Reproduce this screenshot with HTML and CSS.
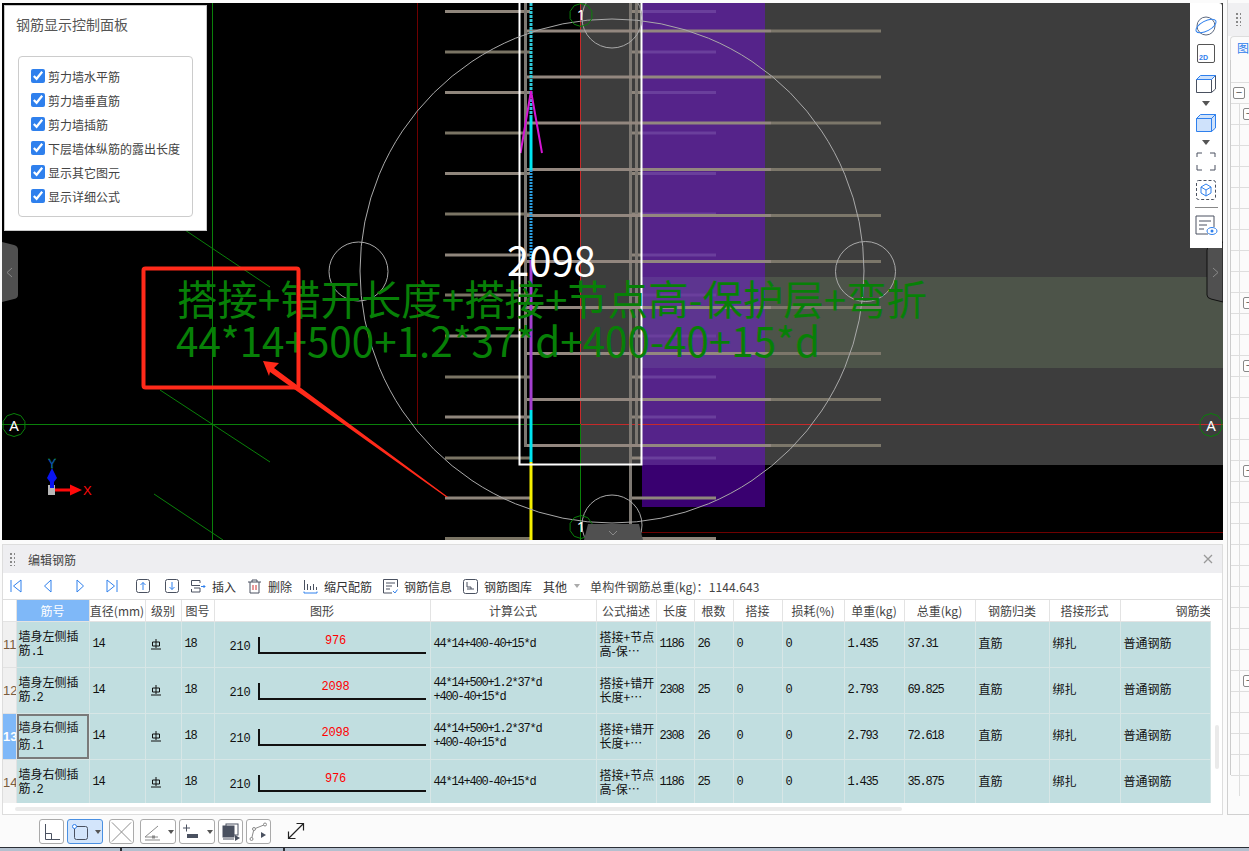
FILE: index.html
```html
<!DOCTYPE html>
<html lang="zh">
<head>
<meta charset="utf-8">
<title>编辑钢筋</title>
<link rel="stylesheet" href="styles.css">
</head>
<body>
<div class="main">
  <div class="left">
    <div class="canvas">
      <svg class="scene" viewBox="2 3 1221 537" width="1221" height="537">
        <defs>
          <polygon id="bub" class="bub" points="0,-11.5 6.8,-9.3 10.9,-3.6 10.9,3.6 6.8,9.3 0,11.5 -6.8,9.3 -10.9,3.6 -10.9,-3.6 -6.8,-9.3"/>
        </defs>
        <rect class="gray" x="581" y="3" width="642" height="462"/>
        <rect class="band" x="765" y="277" width="458" height="91"/>
        <rect class="purple-d" x="642" y="465" width="123" height="42"/>
        <rect class="purple" x="642" y="3" width="123" height="462"/>
        <rect class="purple-l" x="642" y="277" width="123" height="91"/>

        <g class="g-line">
          <line x1="212.5" y1="3" x2="212.5" y2="540"/>
          <line x1="185" y1="230" x2="270" y2="287"/>
          <line x1="160" y1="390" x2="270" y2="462"/>
          <line x1="154" y1="494" x2="223" y2="540"/>
          <line x1="2" y1="424.5" x2="581" y2="424.5"/>
          <line x1="580.5" y1="425" x2="580.5" y2="540"/>
        </g>
        <g class="dr-line">
          <line x1="417.5" y1="3" x2="417.5" y2="424"/>
          <line x1="642" y1="532.5" x2="1223" y2="532.5"/>
        </g>
        <g class="r-line">
          <line x1="580.5" y1="3" x2="580.5" y2="424"/>
          <line x1="581" y1="424.5" x2="1223" y2="424.5"/>
        </g>

        <g class="rb-a">
          <line x1="445" y1="11.5" x2="530" y2="11.5"/>
          <line x1="445" y1="92.5" x2="530" y2="92.5"/>
          <line x1="445" y1="173.5" x2="530" y2="173.5"/>
          <line x1="445" y1="255" x2="530" y2="255"/>
          <line x1="445" y1="336" x2="530" y2="336"/>
          <line x1="445" y1="417" x2="530" y2="417"/>
          <line x1="445" y1="498" x2="530" y2="498"/>
          <line x1="630" y1="498" x2="716" y2="498"/>
          <line x1="630" y1="538.5" x2="716" y2="538.5"/>
        </g>
        <g class="rb-b">
          <line x1="445" y1="52" x2="530" y2="52"/>
          <line x1="445" y1="133" x2="530" y2="133"/>
          <line x1="445" y1="214" x2="530" y2="214"/>
          <line x1="445" y1="295" x2="530" y2="295"/>
          <line x1="445" y1="377" x2="530" y2="377"/>
          <line x1="445" y1="458" x2="530" y2="458"/>
          <line x1="445" y1="538.5" x2="530" y2="538.5"/>
        </g>
        <g class="rb-p">
          <line x1="642" y1="11.5" x2="716" y2="11.5"/>
          <line x1="642" y1="52" x2="716" y2="52"/>
          <line x1="642" y1="92.5" x2="716" y2="92.5"/>
          <line x1="642" y1="133" x2="716" y2="133"/>
          <line x1="642" y1="173.5" x2="716" y2="173.5"/>
          <line x1="642" y1="214" x2="716" y2="214"/>
          <line x1="642" y1="255" x2="716" y2="255"/>
          <line x1="642" y1="295" x2="716" y2="295"/>
          <line x1="642" y1="336" x2="716" y2="336"/>
          <line x1="642" y1="377" x2="716" y2="377"/>
          <line x1="642" y1="417" x2="716" y2="417"/>
          <line x1="642" y1="458" x2="716" y2="458"/>
        </g>
        <g class="rb-a">
          <line x1="630" y1="11.5" x2="642" y2="11.5"/>
          <line x1="630" y1="52" x2="642" y2="52"/>
          <line x1="630" y1="92.5" x2="642" y2="92.5"/>
          <line x1="630" y1="133" x2="642" y2="133"/>
          <line x1="630" y1="173.5" x2="642" y2="173.5"/>
          <line x1="630" y1="214" x2="642" y2="214"/>
          <line x1="630" y1="255" x2="642" y2="255"/>
          <line x1="630" y1="295" x2="642" y2="295"/>
          <line x1="630" y1="336" x2="642" y2="336"/>
          <line x1="630" y1="377" x2="642" y2="377"/>
          <line x1="630" y1="417" x2="642" y2="417"/>
          <line x1="630" y1="458" x2="642" y2="458"/>
        </g>
        <g class="rb-v">
          <line x1="525.5" y1="3" x2="525.5" y2="447"/>
          <line x1="630.5" y1="3" x2="630.5" y2="540"/>
          <line x1="636.5" y1="3" x2="636.5" y2="447"/>
        </g>
        <g class="rb-c">
          <line x1="527" y1="31" x2="771" y2="31"/>
          <line x1="527" y1="77" x2="771" y2="77"/>
          <line x1="527" y1="123" x2="771" y2="123"/>
          <line x1="527" y1="169.5" x2="771" y2="169.5"/>
          <line x1="527" y1="215.5" x2="771" y2="215.5"/>
          <line x1="527" y1="261.5" x2="771" y2="261.5"/>
          <line x1="527" y1="307.5" x2="771" y2="307.5"/>
          <line x1="527" y1="353.5" x2="771" y2="353.5"/>
          <line x1="527" y1="399.5" x2="771" y2="399.5"/>
          <line x1="527" y1="445.5" x2="771" y2="445.5"/>
        </g>
        <g class="rb-d">
          <line x1="771" y1="31" x2="881" y2="31"/>
          <line x1="771" y1="77" x2="881" y2="77"/>
          <line x1="771" y1="123" x2="881" y2="123"/>
          <line x1="771" y1="169.5" x2="881" y2="169.5"/>
          <line x1="771" y1="215.5" x2="881" y2="215.5"/>
          <line x1="771" y1="261.5" x2="881" y2="261.5"/>
          <line x1="771" y1="307.5" x2="881" y2="307.5"/>
          <line x1="771" y1="353.5" x2="881" y2="353.5"/>
          <line x1="771" y1="399.5" x2="881" y2="399.5"/>
          <line x1="771" y1="445.5" x2="881" y2="445.5"/>
        </g>

        <line class="c-dot" x1="531" y1="3" x2="531" y2="117"/>
        <line class="c-solid" x1="531" y1="117" x2="531" y2="170"/>
        <line class="c-blue" x1="531" y1="170" x2="531" y2="260"/>
        <line class="c-mag" x1="531" y1="260" x2="531" y2="410"/>
        <line class="c-solid" x1="531" y1="410" x2="531" y2="462"/>
        <line class="c-yel" x1="531" y1="462" x2="531" y2="540"/>
        <polyline class="chev" points="520.5,153 531,91 542,153"/>

        <path class="w-frame" d="M519.5 3V464.5H641.5V3"/>

        <g class="thin">
          <circle cx="612" cy="271" r="252"/>
          <circle cx="358.500" cy="271.500" r="29.500"/>
          <circle cx="865.500" cy="271.500" r="30"/>
          <circle cx="612" cy="18" r="30"/>
          <circle cx="612" cy="525" r="30"/>
        </g>

        <use href="#bub" x="14" y="425"/>
        <use href="#bub" x="1211" y="425"/>
        <use href="#bub" x="581" y="15"/>
        <use href="#bub" x="581" y="527"/>
        <text class="bub-t" x="14" y="430.500">A</text>
        <text class="bub-t" x="1211" y="430.500">A</text>
        <text class="bub-t" x="581" y="20">1</text>
        <text class="bub-t" x="581" y="532">1</text>

        <text class="dim" x="507" y="276">2098</text>
        <text class="formula" x="177" y="315">搭接+错开长度+搭接+节点高-保护层+弯折</text>
        <text class="formula" x="176" y="357">44*14+500+1.2*37*d+400-40+15*d</text>

        <rect class="mark" x="143.500" y="268.500" width="155" height="119" rx="2"/>
        <polygon class="arrow" points="263,361 279,363 274,368 448,497 446,497 270,372 269,376"/>

        <rect class="ax-g" x="48" y="485" width="7" height="10"/>
        <polygon class="ax-b" points="52,468 57,478 54,482 54,488 50,488 50,482 47,478"/>
        <text class="ax-y" x="52" y="468">Y</text>
        <rect class="ax-r" x="55" y="488.500" width="16" height="3"/>
        <polygon class="ax-r" points="70,484.500 82,490 70,495.500"/>
        <text class="ax-x" x="83" y="495">X</text>

        <path class="hand" d="M2 242 14 245Q18 246 18 250V295Q18 298 14 299L2 302Z"/>
        <path class="hand edge" d="M1223 242 1211 245Q1207 246 1207 250V295Q1207 298 1211 299L1223 302Z"/>
        <polygon class="hand" points="588,524 639,524 643,540 584,540"/>
        <polyline class="hand-c" points="12,268 7,272.500 12,277"/>
        <polyline class="hand-c" points="1213,268 1218,272.500 1213,277"/>
        <polyline class="hand-c" points="609,531 613,535 617,531"/>
      </svg>

      <div class="panel">
        <div class="panel-title">钢筋显示控制面板</div>
        <div class="panel-box">
          <label class="chk"><input type="checkbox" checked>剪力墙水平筋</label>
          <label class="chk"><input type="checkbox" checked>剪力墙垂直筋</label>
          <label class="chk"><input type="checkbox" checked>剪力墙插筋</label>
          <label class="chk"><input type="checkbox" checked>下层墙体纵筋的露出长度</label>
          <label class="chk"><input type="checkbox" checked>显示其它图元</label>
          <label class="chk"><input type="checkbox" checked>显示详细公式</label>
        </div>
      </div>

      <div class="vtools">
        <svg class="vt" width="22" height="22" viewBox="0 0 22 22"><circle class="s-gray" cx="11" cy="11" r="9"/><ellipse class="s-blue" cx="11" cy="11" rx="11" ry="5" transform="rotate(-28 11 11)"/></svg>
        <div class="vt-2d">2D</div>
        <svg class="vt" width="22" height="22" viewBox="0 0 22 22"><path class="s-dark" d="M1.500 7.500H16.500V20.500H1.500ZM16.500 20.500 20.500 17V3.500L16.500 7.500"/><path class="s-blue f-blue" d="M1.500 7.500 5.500 3.500H20.500L16.500 7.500Z"/></svg>
        <div class="tri"></div>
        <svg class="vt" width="22" height="22" viewBox="0 0 22 22"><path class="s-blue f-blue" d="M1.500 7.500H16.500V20.500H1.500ZM16.500 20.500 20.500 17V3.500L16.500 7.500ZM1.500 7.500 5.500 3.500H20.500L16.500 7.500Z"/></svg>
        <div class="tri"></div>
        <svg class="vt" width="22" height="22" viewBox="0 0 22 22"><path class="s-dark" d="M2 7V3H7M15 3H20V7M20 15V20H15M7 20H2V15"/></svg>
        <svg class="vt" width="22" height="22" viewBox="0 0 22 22"><rect class="s-dash" x="1.500" y="1.500" width="19" height="19" rx="2"/><path class="s-blue" d="M11 5 16 8V14L11 17 6 14V8ZM6 8 11 11 16 8M11 11V17"/></svg>
        <div class="vsep"></div>
        <svg class="vt" width="24" height="22" viewBox="0 0 24 22"><path class="s-dark" d="M14 20H2V2H20V13M5 7H17M5 11H13M5 15H10"/><ellipse class="s-blue" cx="18" cy="17" rx="5" ry="3.500"/><circle class="fill-blue" cx="18" cy="17" r="1.500"/></svg>
      </div>
    </div>

    <div class="editor">
      <div class="ed-head">
        <span class="grip"></span>
        <span class="ed-title">编辑钢筋</span>
        <svg class="ed-close" width="10" height="10" viewBox="0 0 10 10"><path d="M1 1 9 9M9 1 1 9"/></svg>
      </div>
      <div class="ed-bar">
        <span class="nav"><svg width="14" height="16" viewBox="0 0 14 16"><path class="s-blue" d="M2 2V14M12 2 4.500 8 12 14Z"/></svg></span>
        <span class="nav"><svg width="12" height="16" viewBox="0 0 12 16"><path class="s-blue" d="M9 2 2.500 8 9 14Z"/></svg></span>
        <span class="nav"><svg width="12" height="16" viewBox="0 0 12 16"><path class="s-blue" d="M3 2 9.500 8 3 14Z"/></svg></span>
        <span class="nav"><svg width="14" height="16" viewBox="0 0 14 16"><path class="s-blue" d="M12 2V14M2 2 9.500 8 2 14Z"/></svg></span>
        <svg class="box-up" width="14" height="14" viewBox="0 0 14 14"><rect class="s-dark" x=".5" y=".5" width="13" height="13" rx="2"/><path class="s-blue" d="M7 11V3.500M4.500 6 7 3.500 9.500 6"/></svg>
        <svg class="box-dn" width="14" height="14" viewBox="0 0 14 14"><rect class="s-dark" x=".5" y=".5" width="13" height="13" rx="2"/><path class="s-blue" d="M7 3V10.500M4.500 8 7 10.500 9.500 8"/></svg>
        <span class="item first"><svg width="15" height="15" viewBox="0 0 15 15"><path class="s-dark" d="M9 4V1.500H.5V6.500H9M3 9H9V13H.5V10"/><path class="s-blue" d="M10 7.500H14M12.500 6 14 7.500 12.500 9"/></svg>插入</span>
        <span class="item"><svg width="15" height="15" viewBox="0 0 15 15"><path class="s-dark" d="M1 3H14M5 3V1H10V3M3 3V14H12V3"/><path class="s-red" d="M6 6V11M9 6V11"/></svg>删除</span>
        <span class="item"><svg width="15" height="15" viewBox="0 0 15 15"><path class="s-dark" d="M1.500 1V11M4.500 5V11M7.500 7V11M10.500 5V11M13.500 8V11"/><path class="s-blue" d="M1 14H14M1 12.500V14M14 12.500V14"/></svg>缩尺配筋</span>
        <span class="item"><svg width="15" height="15" viewBox="0 0 15 15"><path class="s-dark" d="M9 14H.5V.5H14.500V8M3 4H12M3 7H9M3 10H7"/><path class="s-blue" d="M10 12 12 14 14.500 10.500"/></svg>钢筋信息</span>
        <span class="item"><svg width="15" height="15" viewBox="0 0 15 15"><rect class="s-dark" x=".5" y=".5" width="14" height="14" rx="2"/><path class="s-dark" d="M4 3V8H8V10H4M8 10H11"/></svg>钢筋图库</span>
        <span class="item">其他<span class="caret"></span></span>
        <span class="total">单构件钢筋总重(kg)：1144.643</span>
      </div>
      <div class="tbl-wrap">
        <table class="grid">
          <colgroup>
            <col class="c1"><col class="c2"><col class="c3"><col class="c4"><col class="c5"><col class="c6"><col class="c7"><col class="c8"><col class="c9"><col class="c10"><col class="c11"><col class="c12"><col class="c13"><col class="c14"><col class="c15"><col class="c16"><col class="c17">
          </colgroup>
          <thead>
            <tr><th class="corner"></th><th class="active">筋号</th><th>直径(mm)</th><th>级别</th><th>图号</th><th>图形</th><th>计算公式</th><th>公式描述</th><th>长度</th><th>根数</th><th>搭接</th><th>损耗(%)</th><th>单重(kg)</th><th>总重(kg)</th><th>钢筋归类</th><th>搭接形式</th><th class="clipped">钢筋类</th></tr>
          </thead>
          <tbody>
            <tr>
              <td class="rh">11</td><td class="name">墙身左侧插<br>筋<span class="num">.1</span></td><td class="num">14</td><td class="sym"><svg width="10" height="11" viewBox="0 0 10 11"><path d="M5 0V9M0 10H10M1.500 3H8.500V7H1.500Z"/></svg></td><td class="num">18</td>
              <td><div class="shape"><span class="s-h">210</span><div class="s-bar">976</div></div></td>
              <td class="num f">44*14+400-40+15*d</td><td class="desc">搭接+节点<br>高-保⋯</td><td class="num">1186</td><td class="num">26</td><td class="num">0</td><td class="num">0</td><td class="num">1.435</td><td class="num">37.31</td><td class="cn">直筋</td><td class="cn">绑扎</td><td class="cn">普通钢筋</td>
            </tr>
            <tr>
              <td class="rh">12</td><td class="name">墙身左侧插<br>筋<span class="num">.2</span></td><td class="num">14</td><td class="sym"><svg width="10" height="11" viewBox="0 0 10 11"><path d="M5 0V9M0 10H10M1.500 3H8.500V7H1.500Z"/></svg></td><td class="num">18</td>
              <td><div class="shape"><span class="s-h">210</span><div class="s-bar">2098</div></div></td>
              <td class="num f">44*14+500+1.2*37*d<br>+400-40+15*d</td><td class="desc">搭接+错开<br>长度+⋯</td><td class="num">2308</td><td class="num">25</td><td class="num">0</td><td class="num">0</td><td class="num">2.793</td><td class="num">69.825</td><td class="cn">直筋</td><td class="cn">绑扎</td><td class="cn">普通钢筋</td>
            </tr>
            <tr>
              <td class="rh sel">13</td><td class="name cur">墙身右侧插<br>筋<span class="num">.1</span></td><td class="num">14</td><td class="sym"><svg width="10" height="11" viewBox="0 0 10 11"><path d="M5 0V9M0 10H10M1.500 3H8.500V7H1.500Z"/></svg></td><td class="num">18</td>
              <td><div class="shape"><span class="s-h">210</span><div class="s-bar">2098</div></div></td>
              <td class="num f">44*14+500+1.2*37*d<br>+400-40+15*d</td><td class="desc">搭接+错开<br>长度+⋯</td><td class="num">2308</td><td class="num">26</td><td class="num">0</td><td class="num">0</td><td class="num">2.793</td><td class="num">72.618</td><td class="cn">直筋</td><td class="cn">绑扎</td><td class="cn">普通钢筋</td>
            </tr>
            <tr>
              <td class="rh">14</td><td class="name">墙身右侧插<br>筋<span class="num">.2</span></td><td class="num">14</td><td class="sym"><svg width="10" height="11" viewBox="0 0 10 11"><path d="M5 0V9M0 10H10M1.500 3H8.500V7H1.500Z"/></svg></td><td class="num">18</td>
              <td><div class="shape"><span class="s-h">210</span><div class="s-bar">976</div></div></td>
              <td class="num f">44*14+400-40+15*d</td><td class="desc">搭接+节点<br>高-保⋯</td><td class="num">1186</td><td class="num">25</td><td class="num">0</td><td class="num">0</td><td class="num">1.435</td><td class="num">35.875</td><td class="cn">直筋</td><td class="cn">绑扎</td><td class="cn">普通钢筋</td>
            </tr>
          </tbody>
        </table>
        <div class="vscroll"></div>
      </div>
      <div class="hscroll"></div>
    </div>
  </div>

  <div class="side">
    <div class="side-head"><span class="grip"></span></div>
    <div class="side-tab">图</div>
    <div class="tree">
      <div class="tree-gap"></div>
      <div class="row r0"><span class="mini">−</span></div>
      <div class="row"><span class="mini">−</span></div>
      <div class="row"></div><div class="row"></div><div class="row"></div><div class="row"></div><div class="row"></div><div class="row"></div><div class="row"></div><div class="row"></div>
      <div class="row"><span class="mini">−</span></div>
      <div class="row"></div><div class="row"></div>
      <div class="row"><span class="mini">−</span></div>
      <div class="row"></div><div class="row"></div><div class="row"></div><div class="row"></div>
      <div class="row"><span class="mini">−</span></div>
      <div class="row"></div><div class="row"></div><div class="row"></div><div class="row"></div><div class="row"></div><div class="row"></div><div class="row"></div><div class="row"></div><div class="row"></div>
      <div class="row"><span class="mini">−</span></div>
      <div class="row"></div><div class="row"></div><div class="row"></div><div class="row"></div><div class="row"></div>
    </div>
  </div>
</div>

<div class="tools">
  <button class="tbtn"><svg width="22" height="22" viewBox="0 0 22 22"><path class="s-dark" d="M4.500 3V18.500H19M4.500 12.500H10.500V18.500"/></svg></button>
  <button class="tbtn wide on"><svg width="20" height="20" viewBox="0 0 20 20"><rect class="s-dark" x="4.500" y="4.500" width="13" height="13" rx="2"/><circle class="s-blue f-white" cx="4.500" cy="4.500" r="2"/></svg><span class="caret dark"></span></button>
  <button class="tbtn off"><svg width="24" height="24" viewBox="0 0 24 24"><path class="s-soft" d="M2 2 22 22M22 2 2 22"/></svg></button>
  <button class="tbtn wide"><svg width="20" height="20" viewBox="0 0 20 20"><path class="s-soft" d="M2 15 15 4M2 15H15M2 18H17"/><rect class="f-soft" x="9" y="13.500" width="3" height="3"/></svg><span class="caret dark"></span></button>
  <button class="tbtn wide"><svg width="20" height="20" viewBox="0 0 20 20"><path class="s-dark" d="M1 6H8M4.500 2.500V9.500"/><rect class="f-dark" x="5" y="12" width="11" height="4"/></svg><span class="caret dark"></span></button>
  <button class="tbtn"><svg width="20" height="20" viewBox="0 0 20 20"><rect class="s-dark" x="5" y="2" width="12" height="11"/><rect class="f-dark s-dark" x="2" y="4" width="11" height="11"/><path class="s-dark" d="M2 17H13"/><polygon class="f-dark" points="14,13 19,16 14,19"/></svg></button>
  <button class="tbtn"><svg width="20" height="20" viewBox="0 0 20 20"><path class="s-soft" d="M2.500 17 5 7 16 2.500"/><circle class="s-soft f-white" cx="2.500" cy="17" r="1.500"/><circle class="s-soft f-white" cx="5" cy="7" r="1.500"/><circle class="s-soft f-white" cx="16" cy="2.500" r="1.500"/><polygon class="f-dark" points="12,10 17,13 12,16"/></svg></button>
  <svg class="expand" width="18" height="18" viewBox="0 0 18 18"><path class="s-black" d="M1.500 16.500 16.500 1.500M9.500 1.500H16.500V8.500M1.500 9.500V16.500H8.500"/></svg>
</div>
<div class="taskbar"><span class="sep a"></span><span class="sep b"></span></div>
</body>
</html>
```
FILE: styles.css
```css
* { box-sizing: border-box; }
html, body { margin: 0; padding: 0; }
body {
  width: 1249px; height: 851px; overflow: hidden; background: #fbfbfb;
  font-family: "Noto Sans CJK SC", "Liberation Sans", sans-serif;
  font-size: 12px; color: #333;
}
.main { display: flex; height: 815px; }
.left { margin-left: 2px; width: 1221px; padding-top: 3px; }
.canvas { position: relative; height: 537px; background: #000; overflow: hidden; }
.scene { display: block; }

/* scene */
.gray { fill: #3d3d3d; }
.band { fill: #4d5449; }
.purple { fill: #55238a; }
.purple-l { fill: #5d3590; }
.purple-d { fill: #390070; }
.g-line line { stroke: #0a800a; stroke-width: 1; }
.dr-line line { stroke: #6e0000; stroke-width: 1; }
.r-line line { stroke: #c62a2a; stroke-width: 1; }
.rb-a line { stroke: #8f867c; stroke-width: 3; }
.rb-b line { stroke: #7a7464; stroke-width: 3; }
.rb-p line { stroke: #6a3f9c; stroke-width: 3; }
.rb-v line { stroke: #7d7872; stroke-width: 3; }
.rb-c line { stroke: #93877f; stroke-width: 3; }
.rb-d line { stroke: #7c776a; stroke-width: 3; }
.c-dot { stroke: #30c8d8; stroke-width: 3; stroke-dasharray: 3 1; }
.c-solid { stroke: #00e5f0; stroke-width: 3; }
.c-blue { stroke: #2a9de0; stroke-width: 3; stroke-dasharray: 2 1; }
.c-mag { stroke: #a43fd0; stroke-width: 3; }
.c-yel { stroke: #f5f000; stroke-width: 3; }
.chev { fill: none; stroke: #d414d4; stroke-width: 2; }
.w-frame { fill: none; stroke: #fff; stroke-width: 2; }
.thin circle { fill: none; stroke: #a9a9a9; stroke-width: 1; }
.bub { fill: none; stroke: #0a800a; stroke-width: 1; }
.bub-t { fill: #fff; font: 15px "Noto Sans", sans-serif; text-anchor: middle; }
.dim { fill: #fff; font: 40px "Noto Sans CJK SC", sans-serif; }
.formula { fill: #078007; font: 40.4px "Noto Sans CJK SC", sans-serif; }
.mark { fill: none; stroke: #ff2a1a; stroke-width: 4; }
.arrow { fill: #ff2a1a; }
.ax-g { fill: #b8b8b8; }
.ax-b { fill: #0a14f0; }
.ax-y { fill: #0a14f0; stroke: #19d019; stroke-width: .3; font: 12px "Liberation Sans", sans-serif; text-anchor: middle; }
.ax-r { fill: #ff0a0a; }
.ax-x { fill: #ff0a0a; font: 13px "Liberation Sans", sans-serif; }
.hand { fill: #505050; }
.hand.edge { stroke: #111; stroke-width: 1; }
.hand-c { fill: none; stroke: #8a8a8a; stroke-width: 1; }

/* control panel */
.panel {
  position: absolute; left: 2px; top: 2px; width: 203px; height: 226px;
  background: #fff; border: 1px solid #c8c8c8; padding: 8px 13px 0 11px;
}
.panel-title { font-size: 14px; line-height: 20px; color: #555; margin-bottom: 22px; }
.panel-box {
  width: 175px; height: 161px; margin-left: 2px; padding: 7px 0 0 12px;
  border: 1px solid #ccc; border-radius: 4px;
}
.chk { display: flex; align-items: center; height: 24px; color: #444; white-space: nowrap; }
.chk input { width: 14px; height: 14px; margin: 0 3px 0 0; accent-color: #2f80ed; }

/* vertical tool strip */
.vtools {
  position: absolute; right: 1px; top: 0; width: 32px; height: 245px;
  background: #fff; border-radius: 0 3px 0 0;
  display: flex; flex-direction: column; align-items: center; padding-top: 12px;
}
.vt { display: block; flex: none; }
.vt-2d {
  width: 18px; height: 19px; margin: 7px 0 9px; border: 1px solid #555; border-radius: 2px;
  color: #2f80ed; font: bold 7px/9px "Liberation Sans", sans-serif; padding: 8px 0 0 1px;
}
.tri { width: 0; height: 0; margin: 7px 0 5px; border: 4px solid transparent; border-top: 5px solid #555; border-bottom: 0; }
.vt + .vt { margin-top: 7px; }
.vsep { width: 23px; height: 1px; background: #888; margin: 6px 0 6px; flex: none; }

/* editor */
.editor { height: 271px; margin-top: 4px; border: 1px solid #ddd; background: #fff; }
.ed-head { display: flex; align-items: center; height: 28px; background: #eeeef1; padding-left: 6px; }
.grip {
  display: block; width: 6px; height: 14px; flex: none;
  background-image: radial-gradient(circle, #888 1.1px, transparent 1.3px);
  background-size: 4px 4px;
}
.ed-title { margin-left: 13px; color: #444; }
.ed-close { margin-left: auto; margin-right: 9px; }
.ed-close path { fill: none; stroke: #999; stroke-width: 1.3; }
.ed-bar { display: flex; align-items: center; height: 27px; border-bottom: 1px solid #ddd; white-space: nowrap; }
.nav { display: flex; justify-content: center; width: 32px; flex: none; }
.nav:first-child { margin-left: -3px; }
.box-up { margin-left: 8px; }
.box-dn { margin-left: 15px; }
.item { display: flex; align-items: center; gap: 6px; margin-left: 11px; color: #333; }
.item.first { margin-left: 12px; }
.caret { display: inline-block; width: 0; height: 0; margin-left: 1px; border: 3px solid transparent; border-top: 4px solid #aaa; border-bottom: 0; }
.total { margin-left: 10px; color: #444; letter-spacing: .1px; }

.s-blue { fill: none; stroke: #2f80ed; stroke-width: 1; }
.s-dark { fill: none; stroke: #4a5160; stroke-width: 1; }
.s-gray { fill: none; stroke: #5e6a80; stroke-width: 1; }
.s-red { fill: none; stroke: #d03030; stroke-width: 1; }
.s-soft { fill: none; stroke: #8a8a8a; stroke-width: 1; }
.s-black { fill: none; stroke: #222; stroke-width: 1.2; }
.s-dash { fill: none; stroke: #4a5160; stroke-width: 1; stroke-dasharray: 3 2; }
.f-blue { fill: #cfe2fb; }
.fill-blue { fill: #2f80ed; }
.f-white { fill: #fff; }
.f-dark { fill: #4a5160; }
.f-soft { fill: #8a8a8a; }

/* table */
.tbl-wrap { position: relative; height: 203px; overflow: hidden; }
.grid { table-layout: fixed; width: 1207px; border-collapse: collapse; }
.c1 { width: 13px; } .c2 { width: 73px; } .c3 { width: 56px; } .c4 { width: 36px; }
.c5 { width: 33px; } .c6 { width: 216px; } .c7 { width: 166px; } .c8 { width: 60px; }
.c9 { width: 38px; } .c10 { width: 39px; } .c11 { width: 49px; } .c12 { width: 62px; }
.c13 { width: 60px; } .c14 { width: 71px; } .c15 { width: 74px; } .c16 { width: 71px; }
.c17 { width: 90px; }
.grid th {
  height: 21px; padding: 1px 0 0; font-weight: 400; color: #444; background: #fff;
  border: 1px solid #e3e3e3; border-top: 0; white-space: nowrap; overflow: hidden;
}
.grid th.corner { border-left: 0; }
.grid th.active { background: #7fb8f8; color: #fff; }
.grid th.clipped { text-align: left; padding-left: 55px; border-right: 0; }
.grid td {
  height: 46px; padding: 0 0 0 3px; background: #c1dee0; color: #111;
  border: 1px solid #d7e6e6; line-height: 15px; overflow: hidden; white-space: nowrap;
}
.grid td.cn { padding-bottom: 3px; }
.grid td.rh {
  background: #f0f0f0; color: #7a5c3e; padding: 0; text-align: center;
  font: 13px "Liberation Sans", sans-serif; border-left: 0; border-color: #e2e2e2;
}
.grid td.rh.sel { background: #7fb8f8; color: #fff; font-weight: 700; }
.grid td.name { line-height: 14px; padding-left: 2px; }
.grid td.cur { line-height: 17px; box-shadow: inset 0 0 0 2px #7a7a7a; color: #1a1a1a; }
.num { font-family: "Liberation Mono", monospace; font-size: 12px; letter-spacing: -1.2px; }
.grid td.f { line-height: 14px; }
.grid td.desc { line-height: 14px; }
.grid td.sym { padding-left: 5px; }
.sym svg { display: block; }
.sym path { fill: none; stroke: #111; stroke-width: 1; }
.shape { display: flex; align-items: flex-end; height: 20px; padding-left: 12px; }
.s-h { width: 28px; font-family: "Liberation Mono", monospace; font-size: 12px; line-height: 14px; letter-spacing: -.2px; }
.s-bar {
  width: 168px; height: 17px; border-left: 2px solid #111; border-bottom: 2px solid #111; padding-right: 14px;
  color: #f00; text-align: center; font: 12px/9px "Liberation Mono", monospace; letter-spacing: -.2px;
}
.vscroll { position: absolute; right: 3px; top: 125px; width: 4px; height: 44px; border-radius: 2px; background: #eaeaea; }
.hscroll { width: 887px; height: 4px; margin: 4px 0 0 12px; border-radius: 2px; background: #ebebeb; }

/* right tree */
.side { width: 22px; height: 815px; margin-left: 4px; border-left: 1px solid #d0d0d0; border-bottom: 1px solid #d0d0d0; overflow: hidden; }
.side-head { height: 33px; margin-top: 3px; background: #f0f0f2; padding: 9px 0 0 7px; }
.side-tab {
  height: 25px; margin: 0 0 0 2px; padding: 2px 0 0 6px; border: 1px solid #ddd; border-right: 0; border-bottom: 0;
  border-radius: 4px 0 0 0; color: #2f80ed; font-size: 12px; white-space: nowrap;
}
.tree { width: 20px; height: 715px; margin-left: 2px; border-left: 1px solid #ccc; margin-top: -1px; }
.tree-gap { height: 22px; }
.row {
  position: relative; height: 21px; border-top: 1px solid #dedede;
  background: linear-gradient(#dedede, #dedede) 8px 0 / 1px 100% no-repeat;
}
.row.r0 { background: none; }
.mini {
  position: absolute; left: 12px; top: 4px; width: 12px; height: 12px; background: #fff;
  border: 1px solid #888; border-radius: 2px; font: 11px/9px "Liberation Sans", sans-serif; text-align: center; color: #555;
}
.r0 .mini { left: 2px; }

/* bottom tools */
.tools { display: flex; align-items: flex-start; height: 32px; padding: 4px 0 0 39px; gap: 3px; }
.tbtn {
  display: flex; align-items: center; justify-content: center; gap: 5px;
  width: 25px; height: 25px; padding: 0; background: #fff; border: 1px solid #aaa; border-radius: 3px; flex: none;
}
.tbtn.wide { width: 36px; }
.tbtn.on { background: #d3e5fb; border-color: #4a90e2; }
.tbtn.off { margin-left: 3px; margin-right: 3px; }
.caret.dark { border-top-color: #555; margin: 0; }
.expand { margin: 3px 0 0 13px; }
.taskbar {
  position: relative; height: 4px; background: #b4c0cf; border-top: 1px solid #2b2f36;
}
.sep { position: absolute; top: 0; width: 2px; height: 3px; background: #2b2f36; }
.sep.a { left: 120px; }
.sep.b { left: 283px; }
```
